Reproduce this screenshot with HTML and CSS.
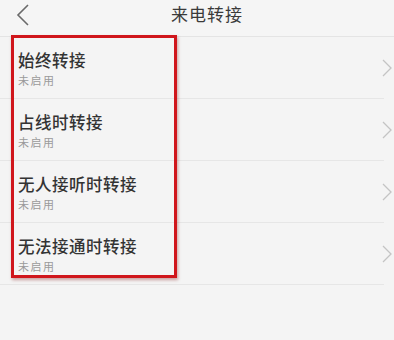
FILE: index.html
```html
<!DOCTYPE html>
<html lang="zh-CN">
<head>
<meta charset="utf-8">
<title>来电转接</title>
<link rel="stylesheet" href="styles.css">
</head>
<body>
<div class="page">
  <header class="topbar">
    <svg class="back" width="14" height="22" viewBox="0 0 14 22"><path d="M12 1 L2 11 L12 21" fill="none" stroke="#6a6a6a" stroke-width="1.6"/></svg>
    <div class="title">来电转接</div>
  </header>
  <ul class="list">
    <li class="row">
      <div class="text"><div class="name">始终转接</div><div class="state">未启用</div></div>
      <svg class="chev" width="10" height="18" viewBox="0 0 10 18"><path d="M1 1 L9 9 L1 17" fill="none" stroke="#c4c4c4" stroke-width="1.3"/></svg>
    </li>
    <li class="row">
      <div class="text"><div class="name">占线时转接</div><div class="state">未启用</div></div>
      <svg class="chev" width="10" height="18" viewBox="0 0 10 18"><path d="M1 1 L9 9 L1 17" fill="none" stroke="#c4c4c4" stroke-width="1.3"/></svg>
    </li>
    <li class="row">
      <div class="text"><div class="name">无人接听时转接</div><div class="state">未启用</div></div>
      <svg class="chev" width="10" height="18" viewBox="0 0 10 18"><path d="M1 1 L9 9 L1 17" fill="none" stroke="#c4c4c4" stroke-width="1.3"/></svg>
    </li>
    <li class="row">
      <div class="text"><div class="name">无法接通时转接</div><div class="state">未启用</div></div>
      <svg class="chev" width="10" height="18" viewBox="0 0 10 18"><path d="M1 1 L9 9 L1 17" fill="none" stroke="#c4c4c4" stroke-width="1.3"/></svg>
    </li>
  </ul>
  <div class="highlight"></div>
</div>
</body>
</html>
```
FILE: styles.css
```css
html, body {
  margin: 0;
  padding: 0;
  background: #f4f4f4;
}
body {
  font-family: "Noto Sans CJK SC", "Noto Sans", sans-serif;
  color: #333;
  width: 394px;
  height: 340px;
  overflow: hidden;
}
.page {
  position: relative;
  width: 394px;
  height: 340px;
}
.topbar {
  position: relative;
  height: 37px;
  border-bottom: 1px solid #e4e4e4;
  background: #f5f5f5;
  box-sizing: border-box;
}
.back {
  position: absolute;
  left: 16px;
  top: 4px;
}
.title {
  text-align: center;
  font-size: 17px;
  line-height: 28px;
  padding-left: 20px;
  color: #3a3a3a;
  letter-spacing: 1px;
}
.list {
  list-style: none;
  margin: 0;
  padding: 0;
}
.row {
  display: flex;
  align-items: center;
  justify-content: space-between;
  height: 61px;
  border-bottom: 1px solid #e6e6e6;
  margin-right: 10px;
  padding-left: 18px;
  padding-right: 0;
  box-sizing: content-box;
}
.row .text {
  align-self: flex-start;
  padding-top: 13px;
}
.name {
  font-size: 16.5px;
  line-height: 20px;
  font-weight: 500;
  color: #333;
  letter-spacing: 0.5px;
}
.state {
  font-size: 11px;
  line-height: 16px;
  margin-top: 2px;
  color: #9a9a9a;
  letter-spacing: 1.5px;
}
.chev {
  margin-right: -8px;
  margin-top: 0;
}
.highlight {
  position: absolute;
  left: 11px;
  top: 35px;
  width: 160px;
  height: 237px;
  border: 3px solid #d0161c;
  box-shadow: 1px 2px 3px rgba(120, 0, 0, 0.35);
}
```
